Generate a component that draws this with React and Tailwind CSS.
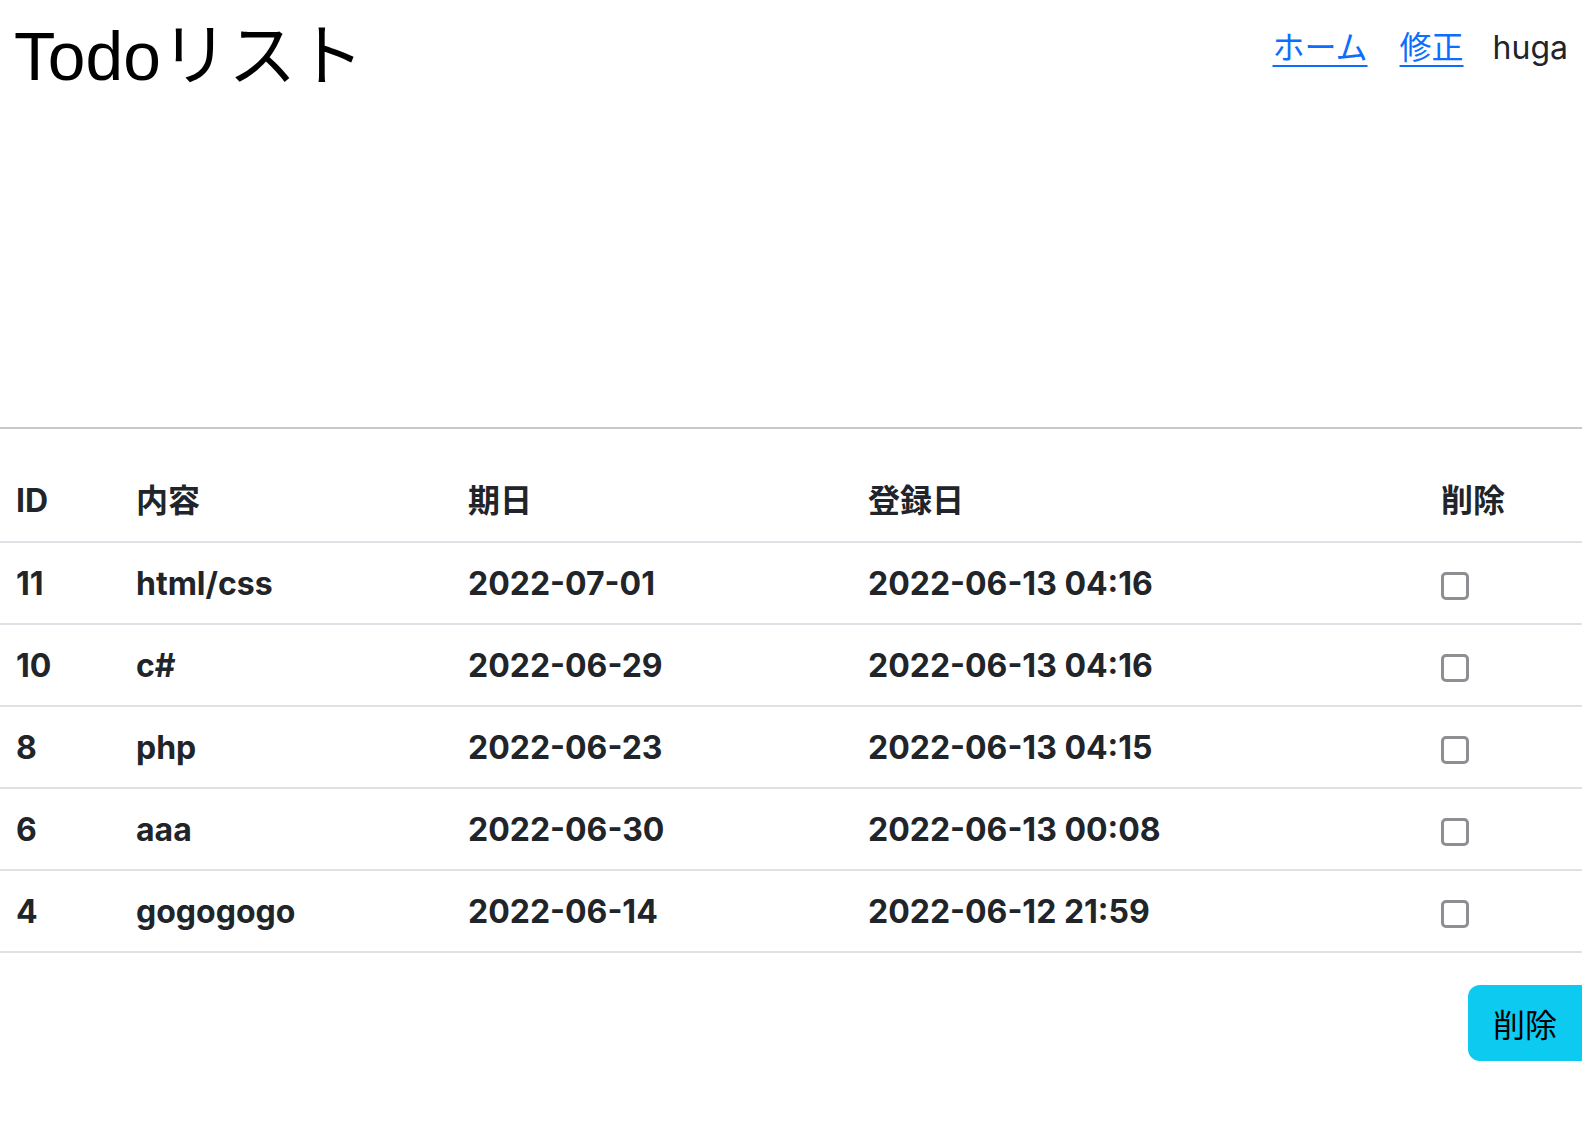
import { useState } from "react";

const todos = [
  { id: 11, content: "html/css", due: "2022-07-01", created: "2022-06-13 04:16" },
  { id: 10, content: "c#", due: "2022-06-29", created: "2022-06-13 04:16" },
  { id: 8, content: "php", due: "2022-06-23", created: "2022-06-13 04:15" },
  { id: 6, content: "aaa", due: "2022-06-30", created: "2022-06-13 00:08" },
  { id: 4, content: "gogogogo", due: "2022-06-14", created: "2022-06-12 21:59" },
];

const App = () => {
  const [checked, setChecked] = useState({});

  const toggle = (id) => setChecked((prev) => ({ ...prev, [id]: !prev[id] }));

  return (
    <div className="w-full min-h-screen bg-white overflow-hidden text-[#212529] font-['Inter','Noto_Sans_CJK_JP',sans-serif]">
      {/* Header */}
      <header className="flex items-start justify-between">
        <h1 className="pt-[16px] pl-[14px] text-[67.7px] leading-[81px] text-black font-normal font-['Liberation_Sans','Noto_Sans_CJK_JP',sans-serif]">
          Todoリスト
        </h1>
        <nav className="flex mt-[24px] text-[32px] leading-[48px] font-['Inter','Noto_Sans_CJK_JP',sans-serif]">
          <a href="#" className="px-[16px] text-[#0d6efd] underline decoration-[2px] underline-offset-[6px]">
            ホーム
          </a>
          <a href="#" className="px-[16px] text-[#0d6efd] underline decoration-[2px] underline-offset-[6px]">
            修正
          </a>
          <span className="pl-[13px] pr-[14px] text-[#212529]">huga</span>
        </nav>
      </header>

      {/* Divider */}
      <hr className="mt-[330px] border-0 border-t-[2px] border-[#c8c9ca]" />

      {/* Table */}
      <table className="w-full mt-[32px] border-collapse text-left text-[32px] leading-[48px] font-bold">
        <thead>
          <tr className="border-b-[2px] border-[#dee2e6]">
            <th className="w-[120px] p-[16px]">ID</th>
            <th className="w-[332px] p-[16px]">内容</th>
            <th className="w-[400px] p-[16px]">期日</th>
            <th className="w-[573px] p-[16px]">登録日</th>
            <th className="p-[16px]">削除</th>
          </tr>
        </thead>
        <tbody>
          {todos.map((t) => (
            <tr key={t.id} className="border-b-[2px] border-[#dee2e6]">
              <td className="pt-[17px] pb-[15px] px-[16px]">{t.id}</td>
              <td className="pt-[17px] pb-[15px] px-[16px]">{t.content}</td>
              <td className="pt-[17px] pb-[15px] px-[16px]">{t.due}</td>
              <td className="pt-[17px] pb-[15px] px-[16px]">{t.created}</td>
              <td className="pt-[17px] pb-[15px] px-[16px]">
                <input
                  type="checkbox"
                  checked={!!checked[t.id]}
                  onChange={() => toggle(t.id)}
                  className="block mt-[4px] appearance-none w-[28px] h-[28px] border-[3px] border-[#8e8e93] rounded-[5px] bg-white checked:bg-[#0d6efd] checked:border-[#0d6efd]"
                />
              </td>
            </tr>
          ))}
        </tbody>
      </table>

      {/* Delete button */}
      <div className="flex justify-end mt-[32px]">
        <button className="w-[114px] h-[76px] bg-[#0dcaf0] text-black text-[32px] leading-[48px] rounded-l-[12px] font-['Noto_Sans_CJK_JP',sans-serif]">
          削除
        </button>
      </div>
    </div>
  );
};

export default App;
